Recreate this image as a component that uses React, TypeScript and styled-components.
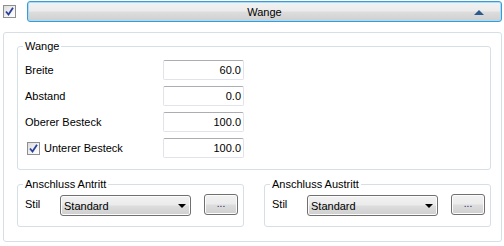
import React from 'react';
import styled, { createGlobalStyle } from 'styled-components';

const GlobalStyle = createGlobalStyle`
    html, body {
        margin: 0;
        padding: 0;
        background: #ffffff;
    }
    body {
        font-family: "Liberation Sans", Arial, sans-serif;
        font-size: 11px;
        color: #000000;
    }
`;

const Page = styled.div`
    width: 504px;
    height: 246px;
    padding-top: 1px;
    box-sizing: border-box;
`;

const HeaderRow = styled.div`
    display: flex;
    align-items: center;
    height: 21px;
    padding-left: 3px;
    padding-right: 2px;
`;

// Win7 style checkbox
const CheckBox = styled.span`
    display: inline-flex;
    align-items: center;
    justify-content: center;
    width: 13px;
    height: 13px;
    box-sizing: border-box;
    border: 1px solid #8e8f8f;
    background: linear-gradient(135deg, #dcdcdc 0%, #f4f4f4 60%, #ffffff 100%);
    flex-shrink: 0;

    svg {
        display: block;
    }
`;

const HeaderButton = styled.div`
    flex: 1;
    margin-left: 11px;
    height: 21px;
    box-sizing: border-box;
    display: flex;
    align-items: center;
    justify-content: center;
    position: relative;
    border: 1px solid #3c9ad6;
    border-radius: 3px;
    box-shadow: inset 0 0 0 1px #a6def7;
    background: linear-gradient(#f2f2f2 0%, #ebebeb 48%, #dddddd 52%, #cfcfcf 100%);
`;

const UpArrow = styled.span`
    position: absolute;
    right: 17px;
    top: 8px;
    width: 0;
    height: 0;
    border-left: 5px solid transparent;
    border-right: 5px solid transparent;
    border-bottom: 5px solid #2c5a8c;
`;

const Panel = styled.div`
    margin: 10px 2px 0 3px;
    height: 210px;
    box-sizing: border-box;
    border: 1px solid #d5dfe5;
    border-radius: 3px;
    padding: 7px 10px 0 13px;
    display: flex;
    flex-direction: column;
    gap: 8px;
`;

const Group = styled.fieldset<{ $height: number }>`
    margin: 0;
    padding: 0;
    min-width: 0;
    height: ${p => p.$height}px;
    box-sizing: border-box;
    border: 1px solid #d5dfe5;
    border-radius: 3px;
`;

const StyleGroupBox = styled(Group)`
    flex: 1;
`;

const Legend = styled.legend`
    margin-left: 5px;
    padding: 0 2px 0 2px;
    line-height: 13px;
    font-size: 11px;
`;

const GroupBody = styled.div`
    padding: 7px 0 0 7px;
    display: flex;
    flex-direction: column;
    gap: 6px;
`;

const FieldRow = styled.div`
    display: flex;
    align-items: center;
    height: 20px;
`;

const FieldLabel = styled.label<{ $indent?: boolean }>`
    width: 138px;
    box-sizing: border-box;
    padding-left: ${p => (p.$indent ? 2 : 0)}px;
    display: flex;
    align-items: center;
    gap: 4px;
`;

const NumberBox = styled.div`
    width: 81px;
    height: 20px;
    box-sizing: border-box;
    border: 1px solid #e2e3ea;
    border-top-color: #abadb3;
    border-radius: 2px;
    text-align: right;
    padding-right: 2px;
    line-height: 18px;
`;

const Row = styled.div`
    display: flex;
    gap: 20px;
`;

const StyleBody = styled.div`
    display: flex;
    align-items: center;
    padding: 4px 0 0 7px;
`;

const StyleLabel = styled.span`
    width: 35px;
    margin-top: -3px;
`;

const Select = styled.div`
    width: 131px;
    height: 21px;
    box-sizing: border-box;
    border: 1px solid #707070;
    border-radius: 3px;
    box-shadow: inset 0 0 0 1px #fcfcfc;
    background: linear-gradient(#f2f2f2 0%, #ebebeb 48%, #dddddd 52%, #cfcfcf 100%);
    display: flex;
    align-items: center;
    justify-content: space-between;
    padding: 0 4px 0 3px;
`;

const DownArrow = styled.span`
    width: 0;
    height: 0;
    border-left: 4px solid transparent;
    border-right: 4px solid transparent;
    border-top: 4px solid #000000;
`;

const DotsButton = styled.div`
    width: 34px;
    height: 21px;
    margin-left: 13px;
    margin-top: -2px;
    box-sizing: border-box;
    border: 1px solid #707070;
    border-radius: 3px;
    box-shadow: inset 0 0 0 1px #fcfcfc;
    background: linear-gradient(#f2f2f2 0%, #ebebeb 48%, #dddddd 52%, #cfcfcf 100%);
    display: flex;
    align-items: center;
    justify-content: center;
    font-size: 10px;
    color: #1a1a6a;
    padding-bottom: 2px;
`;

const Check = () => (
    <CheckBox>
        <svg width="9" height="9" viewBox="0 0 9 9">
            <path d="M1 4.5 L3.5 7.5 L8 0.8" fill="none" stroke="#2a3f9a" strokeWidth="1.8" />
        </svg>
    </CheckBox>
);

const fields = [
    { label: 'Breite', value: '60.0' },
    { label: 'Abstand', value: '0.0' },
    { label: 'Oberer Besteck', value: '100.0' },
    { label: 'Unterer Besteck', value: '100.0', checkbox: true },
];

const StyleGroup: React.FC<{ title: string }> = ({ title }) => (
    <StyleGroupBox $height={49}>
        <Legend>{title}</Legend>
        <StyleBody>
            <StyleLabel>Stil</StyleLabel>
            <Select>
                <span>Standard</span>
                <DownArrow />
            </Select>
            <DotsButton>...</DotsButton>
        </StyleBody>
    </StyleGroupBox>
);

const App: React.FC = () => {
    return (
        <Page>
            <GlobalStyle />
            <HeaderRow>
                <Check />
                <HeaderButton>
                    Wange
                    <UpArrow />
                </HeaderButton>
            </HeaderRow>
            <Panel>
                <Group $height={130}>
                    <Legend>Wange</Legend>
                    <GroupBody>
                        {fields.map(f => (
                            <FieldRow key={f.label}>
                                <FieldLabel $indent={f.checkbox}>
                                    {f.checkbox && <Check />}
                                    {f.label}
                                </FieldLabel>
                                <NumberBox>{f.value}</NumberBox>
                            </FieldRow>
                        ))}
                    </GroupBody>
                </Group>
                <Row>
                    <StyleGroup title="Anschluss Antritt" />
                    <StyleGroup title="Anschluss Austritt" />
                </Row>
            </Panel>
        </Page>
    );
};

export default App;
